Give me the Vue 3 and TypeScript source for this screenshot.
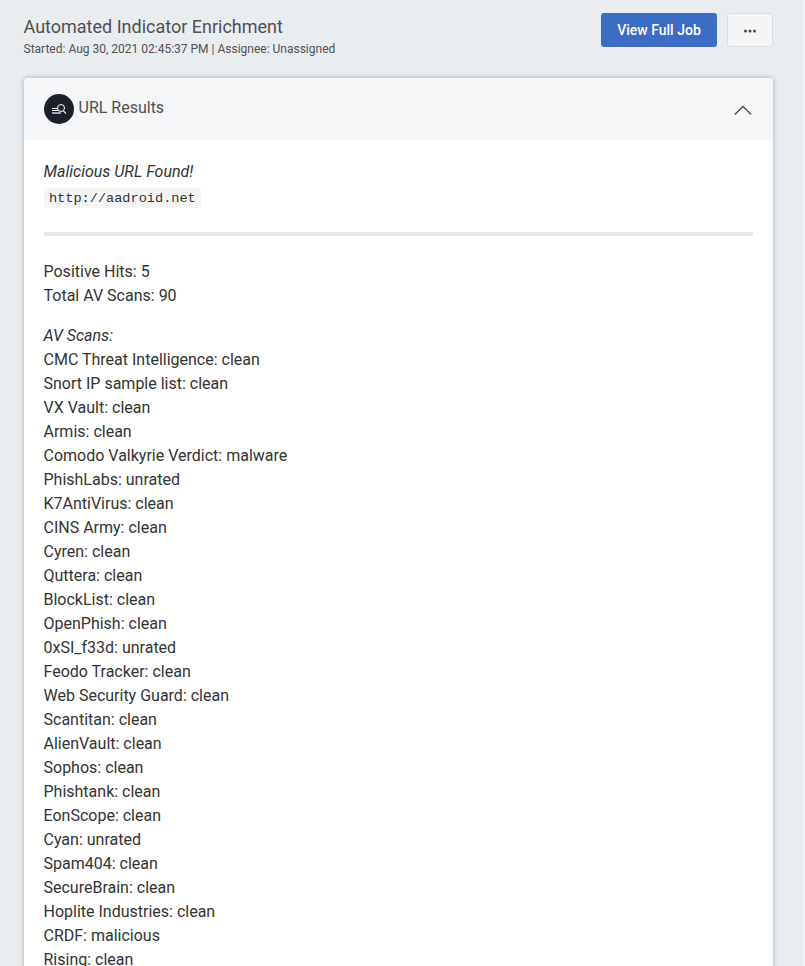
<script setup lang="ts">
interface Scan {
  engine: string
  verdict: 'clean' | 'unrated' | 'malware' | 'malicious'
}

const scans: Scan[] = [
  { engine: 'CMC Threat Intelligence', verdict: 'clean' },
  { engine: 'Snort IP sample list', verdict: 'clean' },
  { engine: 'VX Vault', verdict: 'clean' },
  { engine: 'Armis', verdict: 'clean' },
  { engine: 'Comodo Valkyrie Verdict', verdict: 'malware' },
  { engine: 'PhishLabs', verdict: 'unrated' },
  { engine: 'K7AntiVirus', verdict: 'clean' },
  { engine: 'CINS Army', verdict: 'clean' },
  { engine: 'Cyren', verdict: 'clean' },
  { engine: 'Quttera', verdict: 'clean' },
  { engine: 'BlockList', verdict: 'clean' },
  { engine: 'OpenPhish', verdict: 'clean' },
  { engine: '0xSI_f33d', verdict: 'unrated' },
  { engine: 'Feodo Tracker', verdict: 'clean' },
  { engine: 'Web Security Guard', verdict: 'clean' },
  { engine: 'Scantitan', verdict: 'clean' },
  { engine: 'AlienVault', verdict: 'clean' },
  { engine: 'Sophos', verdict: 'clean' },
  { engine: 'Phishtank', verdict: 'clean' },
  { engine: 'EonScope', verdict: 'clean' },
  { engine: 'Cyan', verdict: 'unrated' },
  { engine: 'Spam404', verdict: 'clean' },
  { engine: 'SecureBrain', verdict: 'clean' },
  { engine: 'Hoplite Industries', verdict: 'clean' },
  { engine: 'CRDF', verdict: 'malicious' },
  { engine: 'Rising', verdict: 'clean' },
]
</script>

<template>
  <main class="page">
    <header class="job">
      <div>
        <h1 class="job-title">Automated Indicator Enrichment</h1>
        <p class="job-meta">Started: Aug 30, 2021 02:45:37 PM | Assignee: Unassigned</p>
      </div>
      <div class="actions">
        <button class="btn primary" type="button">View Full Job</button>
        <button class="btn more" type="button" aria-label="More actions">
          <svg width="14" height="4" viewBox="0 0 14 4" fill="#45474b">
            <circle cx="2.5" cy="2" r="1.5" />
            <circle cx="7" cy="2" r="1.5" />
            <circle cx="11.5" cy="2" r="1.5" />
          </svg>
        </button>
      </div>
    </header>

    <section class="card">
      <div class="card-head">
        <svg class="badge" width="30" height="30" viewBox="0 0 30 30" fill="none" stroke="#fff">
          <circle cx="15" cy="15" r="15" fill="#1b202b" stroke="none" />
          <circle cx="17" cy="14" r="3.5" stroke-width="1" />
          <path d="M19.4 16.8 22 19.7" stroke-width="1.1" />
          <path d="M8 14.5h5.5M8 16.5h6.5" stroke-width="1" />
          <path d="M8 19h9" stroke-width="2" stroke="#a4a6aa" />
        </svg>
        <h2 class="card-title">URL Results</h2>
        <svg class="chevron" width="18" height="11" viewBox="0 0 18 11" fill="none" stroke="#505256" stroke-width="1.4">
          <path d="M.8 9.6 9 1.4l8.2 8.2" />
        </svg>
      </div>
      <div class="card-body">
        <p><em>Malicious URL Found!</em><br /><code>http://aadroid.net</code></p>
        <hr />
        <p>Positive Hits: 5<br />Total AV Scans: 90</p>
        <em>AV Scans:</em>
        <div v-for="scan in scans" :key="scan.engine">{{ scan.engine }}: {{ scan.verdict }}</div>
      </div>
    </section>
  </main>
</template>

<style>
body {
  background: #e9edf0;
  overflow: hidden;
}
</style>

<style scoped>
.page {
  box-sizing: border-box;
  height: 966px;
  padding: 13px 30px 0 23.5px;
  border-right: 2px solid #f0f2f4;
  overflow: hidden;
  background: #e9edf0;
  font-family: Roboto, sans-serif;
  color: #333;
}
.job {
  display: flex;
  justify-content: space-between;
  height: 65px;
}
.job-title {
  margin: 1px 0 0;
  font-size: 18px;
  line-height: 26px;
  font-weight: 400;
  color: #505052;
}
.job-meta {
  margin: 0;
  font-size: 12px;
  line-height: 18px;
  color: #505052;
}
.actions {
  display: flex;
  align-items: flex-start;
  gap: 10px;
}
.btn {
  box-sizing: border-box;
  height: 34px;
  padding: 0;
  border: 0;
  border-radius: 3px;
  font: 500 14px/34px Roboto, sans-serif;
}
.primary {
  width: 116px;
  background: #3d6cc4;
  color: #fff;
}
.more {
  display: flex;
  align-items: center;
  justify-content: center;
  width: 46px;
  padding-top: 2px;
  border: 1px solid #dcdddf;
  background: #f4f5f7;
}
.card {
  border-radius: 4px;
  background: #fff;
  box-shadow: 0 0 5px rgba(0, 0, 0, 0.28);
}
.card-head {
  display: flex;
  align-items: center;
  box-sizing: border-box;
  height: 62px;
  padding: 0 21px 0 20px;
  border-radius: 4px 4px 0 0;
  background: #f4f6f8;
}
.card-title {
  margin: 0 0 3px 5px;
  font-size: 16px;
  line-height: 24px;
  font-weight: 400;
  color: #505052;
}
.chevron {
  margin: 3px 0 0 auto;
}
.card-body {
  padding: 20px;
  font-size: 16px;
  line-height: 24px;
}
.card-body p {
  margin: 0 0 16px;
}
.card-body code {
  display: inline-block;
  box-sizing: border-box;
  height: 20px;
  margin: 4px 0 0;
  padding: 1px 5.44px 0;
  border-radius: 3px;
  background: #f5f5f5;
  font: 13.6px/20px "Liberation Mono", monospace;
  vertical-align: top;
}
.card-body hr {
  height: 4px;
  margin: 24px 0;
  border: 0;
  background: #e7e7e7;
}
</style>
